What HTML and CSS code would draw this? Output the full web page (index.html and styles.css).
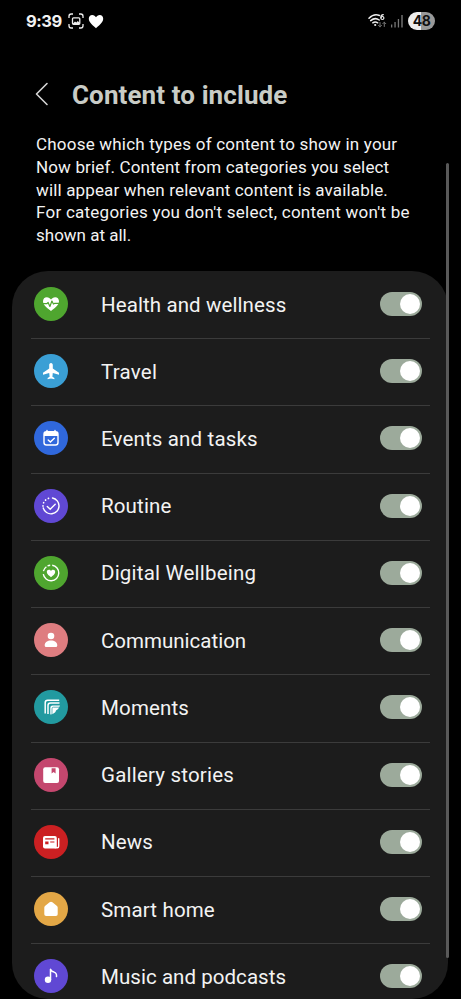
FILE: index.html
```
<!DOCTYPE html>
<html lang="en">
<head>
<meta charset="utf-8">
<title>Content to include</title>
<link rel="stylesheet" href="styles.css">
</head>
<body>
<div class="screen">
  <header class="status">
    <span class="time">9:39</span>
    <svg class="capture" width="16" height="16" viewBox="0 0 16 16" fill="none" stroke="#eee" stroke-width="1.3"><path d="M1 5V3.200Q1 1 3.200 1H5M11 1h1.800Q15 1 15 3.200V5M15 11v1.800Q15 15 12.800 15H11M5 15H3.200Q1 15 1 12.800V11"/><rect x="4.500" y="4.800" width="7.300" height="6.500" rx="1"/><path d="M5 10.500l2-2 1.300 1 1.500-1.500 2 2v1H5z" fill="#eee" stroke="none"/></svg>
    <svg class="heart" width="16" height="15" viewBox="0 0 16 15"><path fill="#fff" d="M8 14.200C5.500 12 .8 8.500.8 4.700.8 2.300 2.300.9 4.200.9 6 .9 7.300 2 8 3.300 8.700 2 10 .9 11.800.9c1.900 0 3.400 1.400 3.400 3.800 0 3.800-4.700 7.300-7.200 9.500z"/></svg>
    <svg class="wifi" width="20" height="16" viewBox="0 0 20 16" fill="none" stroke="#eee" stroke-width="1.500" stroke-linecap="round"><path d="M1 5.200Q6 .2 11.500 2.500M2.700 7.600Q7 4 11.200 7M4.800 9.800Q7.200 8 9.700 9.800"/><circle cx="7.200" cy="12" r="1.100" fill="#eee" stroke="none"/><path stroke-width="1.200" d="M15.300 1.600Q12.800 1.800 12.900 4.800"/><circle cx="14.400" cy="5" r="1.500" stroke-width="1.200"/><path stroke="#777" stroke-width="1" d="M12 9.500v4.300M10.500 12.300l1.500 1.500 1.500-1.500M16.300 13.500V9.200M14.800 10.700l1.500-1.500 1.500 1.500"/></svg>
    <svg class="signal" width="12" height="13" viewBox="0 0 12 13" fill="#777"><rect x="0" y="9.500" width="1.300" height="3"/><rect x="3.400" y="7" width="1.300" height="5.500"/><rect x="6.800" y="4" width="1.300" height="8.500"/><rect x="10.300" y="0" width="1.400" height="12.500"/></svg>
    <span class="battery">48</span>
  </header>
  <div class="titlebar">
    <svg width="14" height="24" viewBox="0 0 14 24" fill="none" stroke="#d4d4d4" stroke-width="1.600" stroke-linecap="round" stroke-linejoin="round"><path d="M12 1.500L1.500 12 12 22.500"/></svg>
    <h1>Content to include</h1>
  </div>
  <p class="intro"><span class="i1">Choose which types of content to show in your</span><span class="i2">Now brief. Content from categories you select</span><span class="i3">will appear when relevant content is available.</span><span class="i4">For categories you don't select, content won't be</span><span class="i5">shown at all.</span></p>
  <ul class="card">
    <li><svg class="icon green" viewBox="0 0 34 34"><path fill="#fff" d="M17 24C14 21.500 9 18.500 9 14.300 9 11.800 10.600 10.200 12.800 10.200c1.800 0 3.300.9 4.200 2.400.9-1.500 2.400-2.400 4.200-2.400 2.200 0 3.800 1.600 3.800 4.100 0 4.200-5 7.200-8 9.700z"/><path fill="none" stroke="#4fa62f" stroke-width="1.200" stroke-linejoin="round" d="M8.500 16.700h4.300l1.300-1.200 1.800 4 2-5.500 1.500 3 1-.6h5.200"/></svg><span class="label l1">Health and wellness</span><span class="toggle"></span></li>
    <li><svg class="icon sky" viewBox="0 0 34 34"><path fill="#fff" d="M17 9c1.200 0 1.800 1 1.800 2.200v3.400l6.200 4.200v2l-6.200-1.800-.4 3.700 2 1.300v1.300L17 24.600l-3.400.7V24l2-1.300-.4-3.700L9 20.800v-2l6.200-4.200v-3.400C15.200 10 15.800 9 17 9z"/></svg><span class="label l2">Travel</span><span class="toggle"></span></li>
    <li><svg class="icon blue" viewBox="0 0 34 34"><rect x="10" y="10.800" width="14" height="13.200" rx="2.500" fill="none" stroke="#fff" stroke-width="1.400"/><path fill="#fff" d="M10 11h14v4H10z"/><path fill="none" stroke="#fff" stroke-width="1.400" stroke-linecap="round" d="M13 9.500v2M21 9.500v2M14.200 19l2.200 2.100 3.900-3.900"/></svg><span class="label l3">Events and tasks</span><span class="toggle"></span></li>
    <li><svg class="icon violet" viewBox="0 0 34 34" fill="none" stroke="#fff" stroke-width="1.400" stroke-linecap="round"><path d="M18.500 9a8 8 0 1 1-9.200 10M13.300 17.400l2.900 2.800 5-5"/><path stroke-width="1.700" stroke-dasharray=".1 3.200" d="M9 17a8 8 0 0 1 7-8"/></svg><span class="label l4">Routine</span><span class="toggle"></span></li>
    <li><svg class="icon green" viewBox="0 0 34 34"><path fill="none" stroke="#fff" stroke-width="1.400" d="M18.200 9.200a7.800 7.800 0 1 1-8.900 9M9.400 15.200a7.800 7.800 0 0 1 3-4.500M13.500 10a7.800 7.800 0 0 1 2.700-.8"/><path fill="#fff" d="M17 21.200c-1.600-1.400-4.200-3-4.200-5.200 0-1.400.9-2.300 2.100-2.300.9 0 1.700.5 2.100 1.300.4-.8 1.200-1.300 2.100-1.300 1.200 0 2.100.9 2.100 2.300 0 2.200-2.600 3.800-4.200 5.200z"/></svg><span class="label l5">Digital Wellbeing</span><span class="toggle"></span></li>
    <li><svg class="icon pink" viewBox="0 0 34 34" fill="#fff"><circle cx="17" cy="13" r="3.300"/><path d="M10.700 22.500c0-3.200 2.800-4.900 6.300-4.900s6.300 1.700 6.300 4.900q0 1.500-1.500 1.500h-9.600q-1.500 0-1.500-1.500z"/></svg><span class="label l6">Communication</span><span class="toggle"></span></li>
    <li><svg class="icon teal" viewBox="0 0 34 34"><g fill="none" stroke="#fff" stroke-width="1.500"><path d="M11.200 23.500V12.700q0-2.500 2.500-2.500h11.500"/><path d="M14 24v-8.400q0-2.500 2.500-2.500h9"/></g><path fill="#fff" d="M16.300 24.500v-6.700q0-2.300 2.300-2.300H26q-1.500 4-4 5-.5 3-5.700 4z"/><path fill="none" stroke="#229aa0" stroke-width=".7" d="M18 24v-5.300q0-1.500 1.500-1.500h5.500"/></svg><span class="label l7">Moments</span><span class="toggle"></span></li>
    <li><svg class="icon rose" viewBox="0 0 34 34"><rect x="9.200" y="9.300" width="15.800" height="15.800" rx="2" fill="#fff"/><path fill="#c4476e" d="M17.600 10.300h4v5.300l-2-1.500-2 1.500z"/></svg><span class="label l8">Gallery stories</span><span class="toggle"></span></li>
    <li><svg class="icon red" viewBox="0 0 34 34"><rect x="9" y="11" width="13.800" height="12.500" rx="2" fill="#fff"/><path fill="none" stroke="#fff" stroke-width="1.400" stroke-linecap="round" d="M24.700 13.800v7.500q0 1.500-1.500 1.500h-2"/><path fill="#cb2022" d="M11.200 13.300h9.200v1.200h-9.200zM11.200 16.400h3.300v2.800h-3.300zM16.200 16.400h4.200v1.200h-4.200z"/></svg><span class="label l9">News</span><span class="toggle"></span></li>
    <li><svg class="icon amber" viewBox="0 0 34 34"><path fill="#fff" d="M15.600 10.300q1.400-1.200 2.800 0l4.600 3.800q.7.600.7 1.500v6.600q0 1.800-1.800 1.800h-9.800q-1.800 0-1.800-1.800v-6.600q0-.9.700-1.500z"/></svg><span class="label l10">Smart home</span><span class="toggle"></span></li>
    <li><svg class="icon violet" viewBox="0 0 34 34"><circle cx="14" cy="20.800" r="3.200" fill="#fff"/><path fill="none" stroke="#fff" stroke-width="1.500" stroke-linecap="round" stroke-linejoin="round" d="M16.500 20.800V10.200q1 2.300 3.500 2.900 3 1 2.500 4.500"/></svg><span class="label l11">Music and podcasts</span><span class="toggle"></span></li>
  </ul>
  <div class="scrollbar"></div>
</div>
</body>
</html>
```
FILE: styles.css
```
* { box-sizing: border-box; }
body { margin: 0; background: #000; color: #f3f3f3; font-family: Roboto, "Liberation Sans", sans-serif; }
.screen { position: relative; width: 461px; height: 999px; overflow: hidden; background: #000; }
.status { display: flex; align-items: center; height: 42px; padding: 0 26px; }
.time { width: 42px; font: 700 16.500px Inter, sans-serif; letter-spacing: -.5px; white-space: nowrap; }
.heart { margin-left: 4px; }
.wifi { margin-left: auto; }
.signal { margin: 0 5px 0 3px; }
.battery { width: 27px; height: 18px; border-radius: 9px; background: linear-gradient(90deg, #eee 48%, #999 48%); color: #111; font: 700 14px/18px Inter, sans-serif; letter-spacing: -.6px; text-align: center; }
.titlebar { display: flex; align-items: center; height: 52px; margin-top: 26px; padding-left: 35px; }
.titlebar svg { margin-right: 23px; }
h1 { margin: 2px 0 0; font-size: 26px; line-height: 30px; font-weight: 700; letter-spacing: .1px; color: #c9ccc6; white-space: nowrap; }
.intro { height: 138px; margin: 0; padding: 13px 0 0 36px; font-size: 17px; line-height: 22.800px; }
.intro span { display: block; width: max-content; white-space: nowrap; }
.i1 { letter-spacing: .21px; }
.i2, .i3 { letter-spacing: .15px; }
.i4 { letter-spacing: .25px; }
.card { width: 436px; height: 728px; margin: 13px 0 0 12px; padding: 0; list-style: none; background: #1c1c1c; border-radius: 36px; }
.card li { position: relative; display: flex; align-items: center; height: 67.220px; padding: 0 26px 0 22px; }
.card li + li::before { content: ""; position: absolute; left: 19px; right: 18px; top: 0; height: 1px; background: #3b3b3b; }
.icon { width: 34px; height: 34px; border-radius: 50%; flex: none; margin: 0 33px 1.200px 0; }
.green { background: #4fa62f; }
.sky { background: #3a9fd5; }
.blue { background: #3068dc; }
.violet { background: #6048d4; }
.pink { background: #de7d80; }
.teal { background: #229aa0; }
.rose { background: #c4476e; }
.red { background: #cb2022; }
.amber { background: #e3a746; }
.label { font-size: 20.500px; line-height: 28px; letter-spacing: .15px; white-space: nowrap; }
.l1 { letter-spacing: .1px; }
.l2 { letter-spacing: .25px; }
.l5, .l8 { letter-spacing: .2px; }
.l6 { letter-spacing: 0; }
.l11 { letter-spacing: .05px; }
.toggle { width: 42px; height: 24px; margin: 0 0 1.200px auto; padding: 2px; border-radius: 12px; background: #9caa9b; }
.toggle::before { content: ""; display: block; width: 20px; height: 20px; margin-left: 18px; border-radius: 50%; background: #fff; }
.scrollbar { position: absolute; left: 446px; top: 163px; width: 3px; height: 795px; border-radius: 2px; background: #595959; }
```
